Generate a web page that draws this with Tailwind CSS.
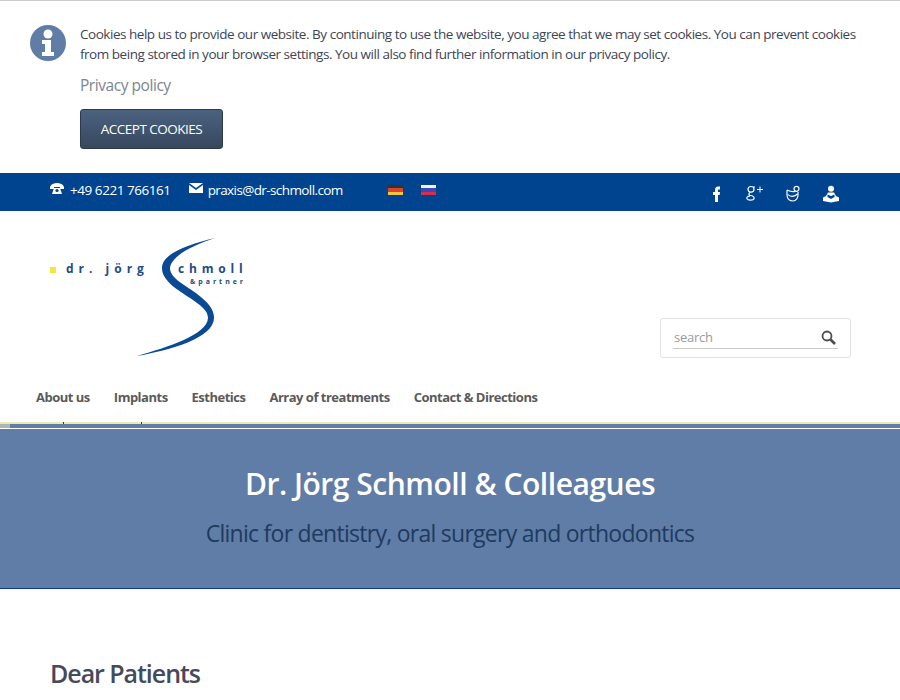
<!DOCTYPE html>
<html lang="en">
<head>
    <meta charset="UTF-8">
    <meta name="viewport" content="width=device-width, initial-scale=1.0">
    <title>Dr. Jörg Schmoll &amp; Colleagues</title>
    <script src="https://cdn.jsdelivr.net/npm/@tailwindcss/browser@4"></script>
</head>
<body class="bg-white font-['Open_Sans',sans-serif] h-[700px] overflow-hidden">
    <!-- cookie notice -->
    <div class="h-[173px] border-t border-[#cccccc] pl-[30px] pr-[40px] pt-[23px] flex gap-[14px]">
        <svg class="w-[36px] h-[36px] shrink-0 mt-[1px]" viewBox="0 0 36 36">
            <circle cx="18" cy="18" r="18" fill="#5f7da6"/>
            <circle cx="18" cy="9" r="4.5" fill="#fff"/>
            <path d="M12 15h9v12h3v4H12v-4h3v-8h-3z" fill="#fff"/>
        </svg>
        <div>
            <p class="text-[13.5px] leading-[20px] text-[#3d4556] tracking-[-0.47px]">Cookies help us to provide our website. By continuing to use the website, you agree that we may set cookies. You can prevent cookies from being stored in your browser settings. You will also find further information in our privacy policy.</p>
            <a class="block mt-[10px] text-[15.5px] leading-[22px] text-[#7c8494] tracking-[-0.45px]">Privacy policy</a>
            <button class="mt-[13px] w-[143px] h-[40px] rounded-[3px] border border-[#2c3a4e] bg-gradient-to-b from-[#4b6280] to-[#38485e] text-white text-[13.5px] tracking-[-0.5px]">ACCEPT COOKIES</button>
        </div>
    </div>

    <!-- contact bar -->
    <div class="h-[38px] bg-[#004490] flex items-center pl-[50px] pb-[4px] text-white text-[13.5px] tracking-[-0.45px]">
        <svg class="w-[14px] h-[11px] mb-[3px]" viewBox="0 0 14 11" fill="#fff">
            <path d="M0 4C1 1 4 0 7 0s6 1 7 4v2h-4V4H4v2H0z"/>
            <path d="M4 5h6l2 6H2z"/>
            <circle cx="7" cy="7.5" r="1.6" fill="#004490"/>
        </svg>
        <span class="ml-[6px]">+49 6221 766161</span>
        <svg class="ml-[18px] w-[14px] h-[10px] mb-[4px]" viewBox="0 0 14 10" fill="#fff">
            <path d="M0 0h14L7 5z"/>
            <path d="M0 2l7 5 7-5v8H0z"/>
        </svg>
        <span class="ml-[5px] tracking-[-0.6px]">praxis@dr-schmoll.com</span>
        <div class="ml-[45px] w-[15px] h-[10px] flex flex-col">
            <div class="h-[3px] bg-[#3a3128]"></div>
            <div class="h-[4px] bg-[#d8432c]"></div>
            <div class="h-[3px] bg-[#eec643]"></div>
        </div>
        <div class="ml-[18px] w-[15px] h-[10px] flex flex-col">
            <div class="h-[3px] bg-[#f2f2f7]"></div>
            <div class="h-[4px] bg-[#3f47b8]"></div>
            <div class="h-[3px] bg-[#d92d4a]"></div>
        </div>
        <div class="ml-auto mr-[60px] mt-[7px] flex items-center gap-[20px]">
            <svg class="w-[18px] h-[18px]" viewBox="0 0 18 18" fill="#fff">
                <path d="M7 17V10H5V7h2V5c0-2 1-3.500 3.200-3.500H12v3h-1.200C10 4.500 10 5 10 5.500V7h2l-.4 3H10v7z"/>
            </svg>
            <svg class="w-[18px] h-[18px]" viewBox="0 0 18 18" fill="none" stroke="#fff" stroke-width="1.200">
                <path d="M5 1.500c-2 0-3 1.300-3 2.800s1 2.800 3 2.800 3-1.300 3-2.800-1-2.800-3-2.800zM6.500 2H9M4 7.500C2.500 8.500 2.500 9.700 4 10.200l2 .6c2 .7 2.500 1.500 2 3-.5 1.500-6 2-7 0-.5-1.500.5-2.500 3-3"/>
                <path d="M11 4.500h6M14 1.500v6" stroke-width="1"/>
            </svg>
            <svg class="w-[18px] h-[18px]" viewBox="0 0 18 18" fill="none" stroke="#fff" stroke-width="1.200">
                <path d="M3 5c3 1.500 6 2 8 1.500M3 5v5c0 4 3 6 6 6s5-3 5-6V7"/>
                <path d="M4 9.500c2 2.500 6.500 2.500 9.500-.5"/>
                <circle cx="12.500" cy="3.800" r="2.500"/>
            </svg>
            <svg class="w-[18px] h-[18px]" viewBox="0 0 18 18" fill="#fff">
                <circle cx="9" cy="3.800" r="3"/>
                <path d="M6 7.500h6l2 3.500 3 1.500V16l-8 1.500L1 16v-3.500L4 11z"/>
                <path d="M5.500 9.500L9 11l3.500-1.500V12L9 14l-3.500-2z" fill="#004490"/>
            </svg>
        </div>
    </div>

    <!-- logo, search and navigation -->
    <header class="h-[211px] relative">
        <div class="pl-[50px] pt-[27px] flex">
            <div class="relative w-[200px] h-[119px]">
                <svg class="absolute left-0 top-0 w-[200px] h-[119px]" viewBox="0 0 200 119">
                    <rect x="0" y="29" width="6" height="6" fill="#f4e838"/>
                    <path d="M165 0C136 7 112 16 112 30C112 43 128 52 140 60C150 67 158 72 158 80C157 97 118 109 87 118C120 112 165 100 164 79C164 66 146 55 134 47C125 41 120 36 120 30C121 19 140 8 165 0Z" fill="#0a4a95"/>
                </svg>
                <span class="absolute left-[16px] top-[23px] text-[12px] leading-[16px] font-bold text-[#1c4c8c] tracking-[5px] whitespace-nowrap">dr. jörg</span>
                <span class="absolute left-[128px] top-[23px] text-[12px] leading-[16px] font-bold text-[#1c4c8c] tracking-[4.800px] whitespace-nowrap">chmoll</span>
                <span class="absolute left-[140px] top-[39px] text-[7px] leading-[10px] font-bold text-[#1c4c8c] tracking-[3px] whitespace-nowrap">&amp;partner</span>
            </div>
        </div>
        <div class="absolute left-[660px] top-[107px] w-[191px] h-[40px] border border-[#e2e2e2] rounded-[3px] px-[12px] pt-[6px]">
            <div class="h-[24px] border-b border-[#c8c8c8] flex items-center justify-between pr-[2px]">
                <span class="ml-[1px] mt-[2px] text-[13px] text-[#9a9a9a] tracking-[-0.25px]">search</span>
                <svg class="w-[15px] h-[15px] mt-[1px]" viewBox="0 0 15 15" fill="none" stroke="#4d4d4d">
                    <circle cx="6" cy="6" r="4.500" stroke-width="1.800"/>
                    <path d="M9.500 9.500L14 14" stroke-width="2.600"/>
                </svg>
            </div>
        </div>
        <nav class="absolute left-[36px] top-[177px] flex gap-[24px] text-[13px] leading-[18px] font-bold text-[#5a5a5a] tracking-[-0.5px]">
            <a>About us</a>
            <a>Implants</a>
            <a>Esthetics</a>
            <a>Array of treatments</a>
            <a>Contact &amp; Directions</a>
        </nav>
        <div class="absolute left-[63px] -bottom-[2px] w-px h-[2px] bg-[#333333]"></div>
        <div class="absolute left-[141px] -bottom-[2px] w-px h-[2px] bg-[#333333]"></div>
    </header>

    <!-- hero -->
    <div class="h-[2px] bg-[#e9ebb0]"></div>
    <div class="h-[4px] bg-[#5f7da6] flex">
        <div class="w-[10px] bg-[#a9b8b5]"></div>
    </div>
    <div class="h-px bg-white"></div>
    <section class="h-[160px] bg-[#5f7da6] border-b border-[#0b3d86] flex flex-col items-center pt-[36px]">
        <h1 class="text-[30px] leading-[38px] font-semibold text-white tracking-[-0.47px]">Dr. Jörg Schmoll &amp; Colleagues</h1>
        <p class="mt-[14px] text-[23px] leading-[32px] text-[#1f3a5f] tracking-[-0.73px]">Clinic for dentistry, oral surgery and orthodontics</p>
    </section>

    <!-- content -->
    <main class="pl-[50px] pt-[66px]">
        <h2 class="text-[25px] leading-[36px] font-semibold text-[#454a5a] tracking-[-1.05px]">Dear Patients</h2>
    </main>
</body>
</html>
